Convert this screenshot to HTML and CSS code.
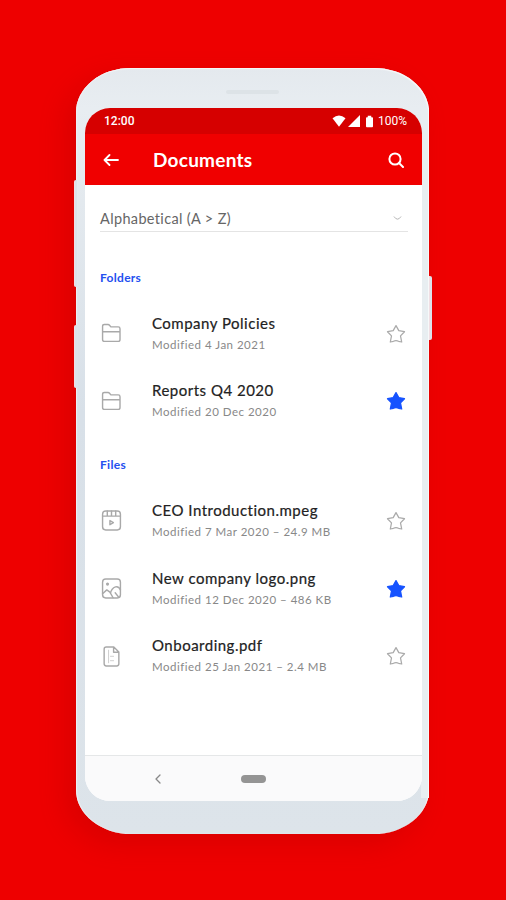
FILE: index.html
```html
<!DOCTYPE html>
<html lang="en">
<head>
<meta charset="utf-8">
<title>Documents</title>
<link rel="stylesheet" href="styles.css">
</head>
<body>
<svg class="defs" width="0" height="0" aria-hidden="true">
  <symbol id="folder" viewBox="0 0 20 20"><path d="M1.5 15.5V3.2q0-1.7 1.7-1.7h3.5q.8 0 1.4.7l1.3 1.5h7q1.7 0 1.7 1.7v10.3q0 1.8-1.8 1.8H3.3q-1.8 0-1.8-1.9ZM1.5 8.3h16.6"/></symbol>
  <symbol id="video" viewBox="0 0 20 20"><rect x="1.5" y="1" width="17" height="18" rx="3"/><path d="M1.5 5.8h17M6 1v4.8M10 1v4.8M14 1v4.8M8.5 10v4l3.3-2Z"/></symbol>
  <symbol id="image" viewBox="0 0 20 20"><rect x="1.5" y="1" width="17" height="18" rx="3"/><path d="m1.5 15 4-3.7 3 2.2 3 5.3M9 14.7q1-4.8 4.8-6.2 3.2-.8 4.7 2.8M13.5 14l3.5 4.5"/><circle cx="6.2" cy="5.8" r=".8"/></symbol>
  <symbol id="document" viewBox="0 0 20 20"><path d="M5 1h7.2l4.8 4.8V17q0 2-2 2H5q-2 0-2-2V3q0-2 2-2ZM12 1v5h5"/><path class="faint" d="M7.2 4v12M9 9.8h3M9 14h3"/></symbol>
  <symbol id="star" viewBox="0 0 20 20"><path d="m10 1.6 2.8 5 5.7 1.1-4 4.2 1.2 6.1-3.1-.7q-2.6-1.2-5.2 0l-3.1.7 1.2-6.1-4-4.2 5.7-1.1Z"/></symbol>
</svg>
<div class="phone">
  <i class="button volume"></i><i class="button assist"></i><i class="button power"></i>
  <i class="speaker"></i>
  <main class="screen">
    <div class="status">
      <span class="time">12:00</span>
      <svg class="wifi" viewBox="0 0 14 12"><path d="M.5 3.2Q7-2.2 13.5 3.2L7 11.8Z"/></svg>
      <svg class="signal" viewBox="0 0 12 12"><path d="M12 0v12H0Z"/></svg>
      <svg class="battery" viewBox="0 0 8 13"><path d="M2 1.5V0h4v1.5h1q1 0 1 1V12q0 1-1 1H1q-1 0-1-1V2.5q0-1 1-1Z"/></svg>
      <span class="percent">100%</span>
    </div>
    <header class="appbar">
      <svg class="back" viewBox="0 0 16 12"><path d="M15 6H1.5M6.5 1l-5 5 5 5"/></svg>
      <h1>Documents</h1>
      <svg class="search" viewBox="0 0 16 16"><circle cx="7" cy="7" r="5.6"/><path d="m11 11 4 4"/></svg>
    </header>
    <div class="sort"><span>Alphabetical (A &gt; Z)</span><svg viewBox="0 0 10 6"><path d="M1 1q4 6 8 0"/></svg></div>
    <section class="folders">
      <h2>Folders</h2>
      <article><svg class="kind"><use href="#folder"/></svg><div class="info"><h3 class="n1">Company Policies</h3><p class="m1">Modified 4 Jan 2021</p></div><svg class="star"><use href="#star"/></svg></article>
      <article><svg class="kind"><use href="#folder"/></svg><div class="info"><h3 class="n2">Reports Q4 2020</h3><p class="m2">Modified 20 Dec 2020</p></div><svg class="star on"><use href="#star"/></svg></article>
    </section>
    <section class="files">
      <h2>Files</h2>
      <article><svg class="kind"><use href="#video"/></svg><div class="info"><h3 class="n3">CEO Introduction.mpeg</h3><p class="m3">Modified 7 Mar 2020 – 24.9 MB</p></div><svg class="star"><use href="#star"/></svg></article>
      <article><svg class="kind"><use href="#image"/></svg><div class="info"><h3 class="n4">New company logo.png</h3><p class="m4">Modified 12 Dec 2020 – 486 KB</p></div><svg class="star on"><use href="#star"/></svg></article>
      <article><svg class="kind"><use href="#document"/></svg><div class="info"><h3 class="n5">Onboarding.pdf</h3><p class="m5">Modified 25 Jan 2021 – 2.4 MB</p></div><svg class="star"><use href="#star"/></svg></article>
    </section>
    <nav><svg viewBox="0 0 6 10"><path d="M5 1 1 5l4 4"/></svg><span class="home"></span></nav>
  </main>
</div>
</body>
</html>
```
FILE: styles.css
```css
* { box-sizing: border-box; }
body { margin: 0; width: 506px; height: 900px; overflow: hidden; padding: 68px 0 0 76px; background: #ee0000; font-family: Lato, "Liberation Sans", sans-serif; }
.defs { position: absolute; }
svg { display: block; fill: none; stroke: currentColor; stroke-linecap: round; stroke-linejoin: round; flex: none; }
h1, h2, h3, p { margin: 0; font-weight: 400; white-space: nowrap; }
.phone { position: relative; width: 353px; height: 766px; padding: 40px 7px 0 9px; border-radius: 55px 55px 55px 55px / 44px 44px 44px 44px; background: linear-gradient(100deg, #dfe5ec 0%, #e3e9ee 35%, #ecf0f3 65%, #e4eaee 100%); background: linear-gradient(180deg, #e4e9ee 0, #e8edf1 40px, #d8e0e8 45%, #dde4ea 100%); box-shadow: inset -1px 1px 1px #f7f9fa, inset 1px 0 1px #edf1f5, -10px 10px 28px rgba(140, 0, 0, .2); }
.phone::after { content: ""; position: absolute; right: 0; top: 40px; width: 7px; height: 690px; background: #e8eef1; border-right: 1px solid #f7f9fa; }
.button { position: absolute; width: 3px; background: #dce3eb; border-left: 1px solid #f0dfe4; border-radius: 2px 0 0 2px; left: -2px; }
.volume { top: 112px; height: 107px; }
.assist { top: 257px; height: 63px; }
.power { left: auto; right: -3px; top: 208px; height: 64px; border-radius: 0 2px 2px 0; }
.speaker { position: absolute; top: 22px; left: 150px; width: 53px; height: 4px; border-radius: 2px; background: #dde3e7; }
.screen { position: relative; z-index: 1; width: 337px; height: 693px; border-radius: 25px; overflow: hidden; background: #fff; display: flex; flex-direction: column; }
.status { height: 26px; background: #d60000; color: #fff; display: flex; align-items: center; padding: 0 15px 0 19px; font-family: Roboto, sans-serif; font-size: 12px; font-weight: 500; flex: none; }
.status svg { fill: #fff; stroke: none; }
.time { margin-right: auto; }
.percent { margin-left: 5px; font-weight: 400; }
.wifi { width: 14px; height: 12px; margin-right: 2px; }
.signal { width: 12px; height: 12px; margin-right: 6px; }
.battery { width: 7px; height: 13px; }
.appbar { height: 51px; background: #f00000; color: #fff; display: flex; align-items: center; padding: 0 18px 0 18px; flex: none; }
.back { width: 16px; height: 12px; stroke-width: 1.8; }
.appbar h1 { margin-left: 34px; font-size: 19px; line-height: 24px; font-weight: 700; letter-spacing: .25px; }
.search { width: 16px; height: 16px; margin-left: auto; stroke-width: 2; }
.sort { height: 46px; margin: 1px 14px 0 15px; padding-top: 19px; border-bottom: 1px solid #e4e4e4; color: #666; display: flex; align-items: center; justify-content: space-between; font-size: 14.5px; flex: none; letter-spacing: .35px; }
.sort svg { width: 9px; height: 5px; margin-right: 6px; color: #aaa; }
section { padding: 0 16px 0 15px; flex: none; }
.folders { margin-top: 37px; }
.files { margin-top: 21px; }
h2 { height: 17px; line-height: 17px; font-size: 12px; font-weight: 700; color: #2450f0; letter-spacing: .3px; }
article { height: 67.6px; display: flex; align-items: center; }
h2 + article { margin-top: 14px; }
.kind { width: 21px; height: 21px; margin-left: 1px; color: #a9a9a9; stroke-width: 1.35; }
.faint { stroke-width: .8; opacity: .65; }
.info { margin-left: 30px; height: 44px; }
h3 { font-size: 15px; line-height: 22px; color: #222; -webkit-text-stroke: .2px #222; letter-spacing: .5px; }
p { font-size: 11.5px; line-height: 22px; color: #888; letter-spacing: .5px; }
.star { width: 20px; height: 20px; margin-left: auto; color: #aaa; stroke-width: 1.25; }
.star.on { color: #1653ff; fill: #1653ff; }
nav { height: 46px; margin-top: auto; border-top: 1px solid #e5e7e8; background: #fafafb; display: flex; align-items: center; padding-left: 70px; flex: none; }
nav svg { width: 6px; height: 10px; color: #888; stroke-width: 1.3; }
.home { width: 25px; height: 8px; border-radius: 4px; background: #949494; margin-left: 80px; }
```
